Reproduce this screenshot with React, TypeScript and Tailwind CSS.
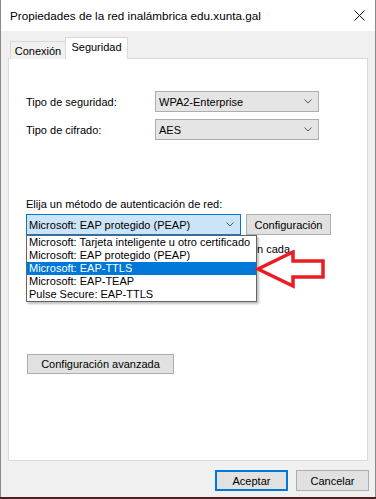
import React from "react";

const font = { fontFamily: '"Liberation Sans", Arial, sans-serif' };

function Chevron() {
  return (
    <svg width="8" height="5" viewBox="0 0 8 5" className="shrink-0">
      <path d="M0.5 0.5 L4 4 L7.5 0.5" fill="none" stroke="#555" strokeWidth="1" />
    </svg>
  );
}

function Select({ value, className }: { value: string; className: string }) {
  return (
    <div className={`flex items-center justify-between border pr-[6px] ${className}`}>
      <span>{value}</span>
      <Chevron />
    </div>
  );
}

const items = [
  "Microsoft: Tarjeta inteligente u otro certificado",
  "Microsoft: EAP protegido (PEAP)",
  "Microsoft: EAP-TTLS",
  "Microsoft: EAP-TEAP",
  "Pulse Secure: EAP-TTLS",
];

export default function App() {
  return (
    <div className="w-[376px] h-[499px] bg-[#4a2226] overflow-hidden text-[11px] leading-[16px] text-black" style={font}>
      <div className="h-[497px] flex flex-col bg-[#f0f0f0] border-l border-r border-[#8a8a8a]">
        {/* title bar */}
        <div className="h-[31px] bg-white flex items-center justify-between pl-[9px] pr-[10px] shrink-0">
          <span className="text-[11.7px]">Propiedades de la red inalámbrica edu.xunta.gal</span>
          <svg width="11" height="11" viewBox="0 0 11 11">
            <path d="M0.5 0.5 L10.5 10.5 M10.5 0.5 L0.5 10.5" stroke="#111" strokeWidth="1" />
          </svg>
        </div>
        {/* tabs */}
        <div className="flex items-end pl-[9px] h-[27px] shrink-0 relative z-10">
          <div className="h-[18px] w-[56px] border border-b-0 border-[#d9d9d9] bg-[#f0f0f0] flex items-center justify-center mb-[-1px]">
            Conexión
          </div>
          <div className="h-[22px] w-[63px] border border-b-0 border-[#d9d9d9] bg-white flex items-center justify-center pb-[3px] mb-[-1px] -ml-[1px]">
            Seguridad
          </div>
        </div>
        {/* panel */}
        <div className="mx-[7px] h-[403px] bg-white border border-[#d9d9d9] relative shrink-0">
          <div className="pl-[17px] pt-[32px]">
            <div className="flex items-center h-[21px]">
              <span className="w-[129px]">Tipo de seguridad:</span>
              <Select value="WPA2-Enterprise" className="w-[164px] h-[21px] pl-[3px] bg-[#e5e5e5] border-[#adadad]" />
            </div>
            <div className="flex items-center h-[21px] mt-[7px]">
              <span className="w-[129px]">Tipo de cifrado:</span>
              <Select value="AES" className="w-[164px] h-[21px] pl-[3px] bg-[#e5e5e5] border-[#adadad]" />
            </div>
            <div className="mt-[56px] h-[16px]">Elija un método de autenticación de red:</div>
            <div className="flex items-center mt-[2px] h-[21px]">
              <Select value="Microsoft: EAP protegido (PEAP)" className="w-[215px] h-[21px] pl-[2px] bg-[#cce4f7] border-[#0078d7]" />
              <div className="ml-[5px] w-[85px] h-[21px] bg-[#e1e1e1] border border-[#adadad] flex items-center justify-center">
                Configuración
              </div>
            </div>
            <div className="mt-[6px] h-[16px] flex">
              <div className="ml-[230px] w-[34px] whitespace-nowrap overflow-hidden flex justify-end">
                <span>n cada</span>
              </div>
            </div>
            <div className="mt-[97px] w-[147px] h-[20px] bg-[#e1e1e1] border border-[#adadad] flex items-center justify-center ml-[1px]">
              Configuración avanzada
            </div>
          </div>
          {/* dropdown list */}
          <div className="absolute left-[17px] top-[176px] w-[231px] bg-white border border-[#646464] shadow-[2px_2px_2px_rgba(0,0,0,0.25)] z-20">
            {items.map((t, i) => (
              <div
                key={t}
                className={`h-[13px] leading-[13px] pl-[2px] whitespace-nowrap ${i === 2 ? "bg-[#0078d7] text-white" : ""}`}
              >
                {t}
              </div>
            ))}
          </div>
          {/* red arrow */}
          <svg className="absolute left-[246px] top-[191px] z-30" width="74" height="40" viewBox="0 0 74 40">
            <polygon
              points="3,19 38,2 38,11 68,11 68,27 38,27 38,36"
              fill="white"
              stroke="#ec1c24"
              strokeWidth="3.5"
              strokeLinejoin="miter"
            />
          </svg>
        </div>
        {/* footer */}
        <div className="flex justify-end gap-[8px] pr-[6px] mt-[9px]">
          <div className="w-[73px] h-[21px] border-2 border-[#0078d7] bg-[#e1e1e1] flex items-center justify-center">Aceptar</div>
          <div className="w-[73px] h-[21px] border border-[#adadad] bg-[#e1e1e1] flex items-center justify-center">Cancelar</div>
        </div>
      </div>
    </div>
  );
}
